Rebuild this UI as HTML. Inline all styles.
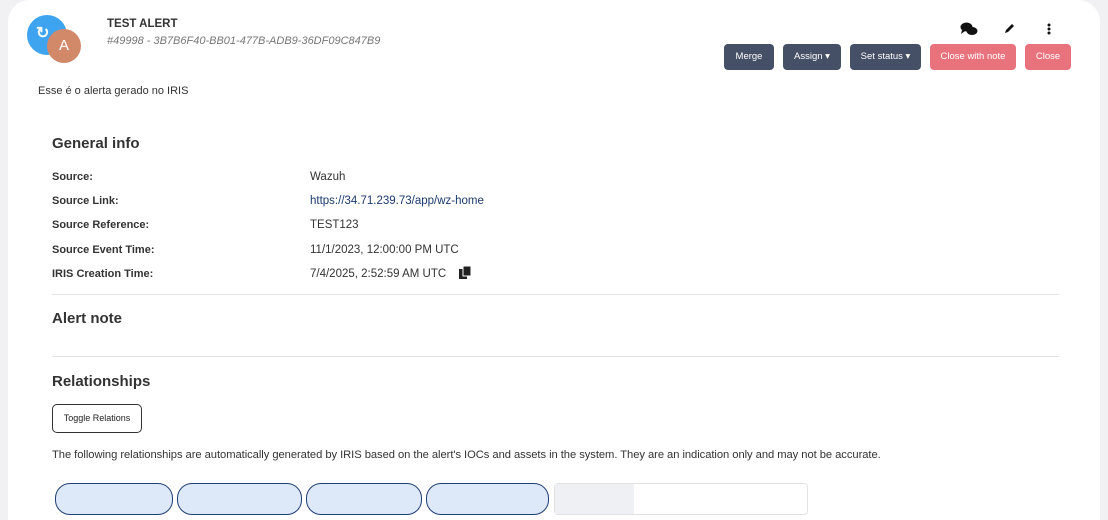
<!DOCTYPE html>
<html><head><style>
body{margin:0;width:1108px;height:498px;overflow:hidden;background:#f1f1f4;font-family:"Liberation Sans",sans-serif;color:#222;position:relative}
.card{position:absolute;left:8px;top:0;width:1092px;height:520px;background:#fff;border-radius:22px 22px 0 0}
.a{position:absolute;line-height:1.2}
.btn{position:absolute;top:44px;height:26px;border-radius:4px;color:#fff;font-size:9.5px;line-height:26px;text-align:center}
.dk{background:#454f66}.rd{background:#e8737c}
.lbl{position:absolute;left:52px;font-size:11px;font-weight:bold;color:#333;line-height:14px}
.val{position:absolute;left:310px;font-size:11.5px;color:#333;line-height:14px}
h3{position:absolute;left:52px;margin:0;font-size:15px;font-weight:bold;color:#333;line-height:18px}
.hr{position:absolute;left:52px;width:1007px;height:1px;background:#e4e4e4}
.pill{position:absolute;top:483px;height:30px;border:1px solid #1f3e72;border-radius:15px;background:#dde8f8}
</style></head><body>
<div class="card"></div>
<div class="a" style="left:27px;top:15px;width:40px;height:40px;border-radius:50%;background:#3fa4f0"></div>
<div class="a" style="left:36px;top:24px;color:#fff;font-size:16px;font-weight:bold">↻</div>
<div class="a" style="left:47px;top:29px;width:34px;height:34px;border-radius:50%;background:#d2896a;color:#fff;font-size:15px;line-height:34px;text-align:center">A</div>
<div class="a" style="left:107px;top:18px;font-size:11.5px;font-weight:bold;color:#333">TEST ALERT</div>
<div class="a" style="left:107px;top:35px;font-size:11px;font-style:italic;color:#777">#49998 - 3B7B6F40-BB01-477B-ADB9-36DF09C847B9</div>
<div class="a" style="left:38px;top:85px;font-size:11px;color:#333">Esse é o alerta gerado no IRIS</div>
<svg class="a" style="left:960px;top:22px" width="18" height="14" viewBox="0 0 18 14"><ellipse cx="6.5" cy="5" rx="6" ry="4.5" fill="#111"/><ellipse cx="12" cy="9" rx="5.5" ry="4" fill="#111"/><path d="M2 8 L1 12 L5 9Z" fill="#111"/></svg>
<svg class="a" style="left:1004px;top:23px" width="11" height="11" viewBox="0 0 11 11"><path d="M1 10 L2 7 L8 1 L10 3 L4 9Z" fill="#111"/></svg>
<svg class="a" style="left:1047px;top:23px" width="4" height="12"><circle cx="2" cy="2" r="1.5" fill="#111"/><circle cx="2" cy="6" r="1.5" fill="#111"/><circle cx="2" cy="10" r="1.5" fill="#111"/></svg>
<div class="btn dk" style="left:724px;width:50px">Merge</div>
<div class="btn dk" style="left:783px;width:58px">Assign ▾</div>
<div class="btn dk" style="left:850px;width:71px">Set status ▾</div>
<div class="btn rd" style="left:930px;width:86px">Close with note</div>
<div class="btn rd" style="left:1025px;width:46px">Close</div>
<h3 style="top:135px">General info</h3>
<div class="lbl" style="top:170px">Source:</div><div class="val" style="top:170px">Wazuh</div>
<div class="lbl" style="top:194px">Source Link:</div><div class="val" style="top:194px;color:#1a3a6e">https://34.71.239.73/app/wz-home</div>
<div class="lbl" style="top:218px">Source Reference:</div><div class="val" style="top:218px">TEST123</div>
<div class="lbl" style="top:243px">Source Event Time:</div><div class="val" style="top:243px">11/1/2023, 12:00:00 PM UTC</div>
<div class="lbl" style="top:267px">IRIS Creation Time:</div><div class="val" style="top:267px">7/4/2025, 2:52:59 AM UTC</div>
<svg class="a" style="left:459px;top:266px" width="13" height="13"><rect x="0" y="3" width="8" height="10" fill="#222"/><rect x="4" y="0" width="8" height="10" fill="#222" stroke="#fff" stroke-width="1"/></svg>
<div class="hr" style="top:294px"></div>
<h3 style="top:310px">Alert note</h3>
<div class="hr" style="top:356px"></div>
<h3 style="top:373px">Relationships</h3>
<div class="a" style="left:52px;top:404px;width:88px;height:27px;border:1px solid #333;border-radius:5px;font-size:9px;line-height:27px;text-align:center">Toggle Relations</div>
<div class="a" style="left:52px;top:449px;font-size:11.2px;color:#333;white-space:nowrap;letter-spacing:-0.05px">The following relationships are automatically generated by IRIS based on the alert's IOCs and assets in the system. They are an indication only and may not be accurate.</div>
<div class="pill" style="left:55px;width:116px"></div>
<div class="pill" style="left:177px;width:123px"></div>
<div class="pill" style="left:306px;width:114px"></div>
<div class="pill" style="left:426px;width:121px"></div>
<div class="a" style="left:554px;top:483px;width:252px;height:30px;border:1px solid #e2e2e2;border-radius:4px;background:#fff"></div>
<div class="a" style="left:555px;top:484px;width:79px;height:30px;background:#eef0f3"></div>
</body></html>
